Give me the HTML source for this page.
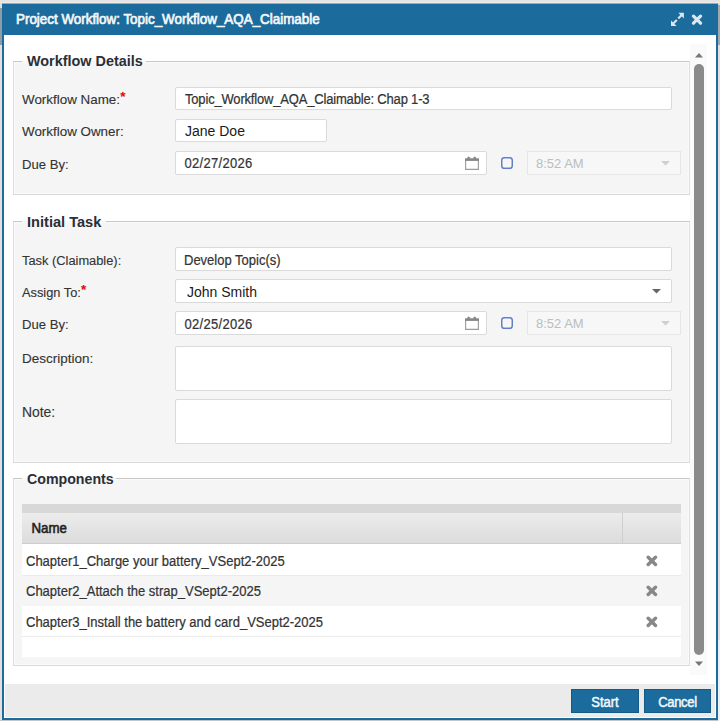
<!DOCTYPE html>
<html><head><meta charset="utf-8">
<style>
html,body{margin:0;padding:0;}
body{width:720px;height:721px;position:relative;overflow:hidden;background:#e0dcd8;font-family:"Liberation Sans",sans-serif;color:#333;}
.a{position:absolute;}
.t{position:absolute;white-space:pre;line-height:normal;}
#dlg{left:2px;top:4px;width:716px;height:716px;background:#1c6b9d;}
#content{left:4px;top:35px;width:712px;height:683px;background:#fff;}
#footer{left:5px;top:684px;width:710px;height:33px;background:#ebebeb;}
.fs{position:absolute;left:13px;width:675px;border:1px solid #dedede;border-top-color:#c8c8c8;border-bottom-color:#d9d9d9;background:#f5f5f5;box-shadow:inset 1px 1px 0 #fafafa, inset -1px -1px 0 #fafafa;}
.lg{position:absolute;background:#f5f5f5;height:1px;}
.lbl{font-size:13.5px;color:#333;letter-spacing:0px;-webkit-text-stroke:0.12px #333;}
.inp{position:absolute;background:#fff;border:1px solid #dadada;box-sizing:border-box;border-radius:2px;}
.itxt{font-size:13px;color:#333;-webkit-text-stroke:0.2px #333;transform:scaleY(1.15);transform-origin:0 12px;}
.req{color:#f00;font-size:13.5px;font-weight:bold;position:absolute;top:-3px;margin-left:0.3px;}
.dis{position:absolute;background:#f7f7f7;border:1px solid #e6e6e6;box-sizing:border-box;}
.btn{position:absolute;background:#1c6b9d;border:1px solid #155a86;box-sizing:border-box;color:#f4f7fa;font-size:13px;-webkit-text-stroke:0.45px #f4f7fa;text-align:center;}
.btn span{display:inline-block;transform:scaleY(1.1);transform-origin:50% 17px;}
.row{position:absolute;left:22px;width:659px;}
</style></head><body>
<div class="a" style="left:0;top:0;width:720px;height:2px;background:#e4e4e4;"></div>
<div class="a" style="left:0;top:2px;width:720px;height:1px;background:#efebe8;"></div>
<div class="a" style="left:0;top:8px;width:2px;height:37px;background:#8d9ca6;"></div>
<div class="a" style="left:718px;top:5px;width:2px;height:40px;background:#9ea9b1;"></div>
<div class="a" style="left:0;top:45px;width:2px;height:676px;background:#e4dfda;"></div>
<div class="a" style="left:718px;top:45px;width:2px;height:676px;background:#e4dfda;"></div>
<div class="a" style="left:0;top:720px;width:720px;height:1px;background:#c4c4c4;"></div>
<div class="a" style="left:718px;top:640px;width:2px;height:81px;background:#eef1f4;"></div>
<div class="a" id="dlg"></div>
<div class="a" style="left:2px;top:3px;width:716px;height:1px;background:#8aaec6;"></div>
<div class="a" id="content"></div>
<div class="a" id="footer"></div>

<div class="t" style="left:16px;top:12px;font-size:13.4px;color:#f4f7fa;-webkit-text-stroke:0.65px #f4f7fa;transform:scaleY(1.12);transform-origin:0 12.35px;">Project Workflow: Topic_Workflow_AQA_Claimable</div>
<svg class="a" style="left:670px;top:12px" width="15" height="15" viewBox="0 0 15 15">
 <g fill="#dce8f0"><path d="M8.3 0.8 L13.9 0.8 L13.9 6.4 Z"/><path d="M1 8.4 L1 14 L6.6 14 Z"/></g>
 <g stroke="#dce8f0" stroke-width="2.1" stroke-linecap="butt"><path d="M11.5 3.2 L8.2 6.5"/><path d="M6.8 7.9 L3.5 11.2"/></g>
</svg>
<svg class="a" style="left:691px;top:14px" width="12" height="12" viewBox="0 0 12 12">
 <path d="M2.5 2.2 L9.5 9.2 M9.5 2.2 L2.5 9.2" stroke="#dce8f0" stroke-width="3.2" stroke-linecap="round"/>
</svg>

<!-- Scrollbar -->
<div class="a" style="left:690px;top:44px;width:17px;height:631px;background:#fafafa;"></div>
<svg class="a" style="left:694px;top:52px" width="10" height="6" viewBox="0 0 10 6"><path d="M1 5.5 L5 1 L9 5.5 Z" fill="#777"/></svg>
<div class="a" style="left:694px;top:64px;width:10px;height:591px;background:#8a8a8a;border-radius:5px;"></div>
<svg class="a" style="left:694px;top:661px" width="10" height="6" viewBox="0 0 10 6"><path d="M1 0.5 L9 0.5 L5 5 Z" fill="#777"/></svg>

<!-- Fieldset 1 -->
<div class="fs" style="top:61px;height:132px;"></div>
<div class="a" style="left:22px;top:52px;width:124px;height:9px;background:#fff;"></div>
<div class="lg" style="left:22px;top:61px;width:124px;"></div>
<div class="t" style="left:27px;top:53px;font-size:14.4px;font-weight:bold;color:#2b2f36;">Workflow Details</div>

<div class="t lbl" style="left:22px;top:91.6px;font-size:13.4px;">Workflow Name:<span class="req">*</span></div>
<div class="inp" style="left:175px;top:87px;width:497px;height:23px;"></div>
<div class="t itxt" style="left:185px;top:91.5px;letter-spacing:-0.18px;">Topic_Workflow_AQA_Claimable: Chap 1-3</div>

<div class="t lbl" style="left:22px;top:124.09px;font-size:13.4px;">Workflow Owner:</div>
<div class="inp" style="left:175px;top:119px;width:152px;height:23px;"></div>
<div class="t itxt" style="left:185px;top:123px;font-size:14px;color:#1a1a1a;transform:none;-webkit-text-stroke:0;">Jane Doe</div>

<div class="t lbl" style="left:22px;top:156.87px;font-size:13.1px;">Due By:</div>
<div class="inp" style="left:175px;top:151px;width:312px;height:24px;"></div>
<div class="t itxt" style="left:184.5px;top:156px;letter-spacing:0.3px;">02/27/2026</div>
<svg class="a" style="left:465px;top:156px" width="14" height="14" viewBox="0 0 14 14">
 <path d="M0.6 3 V13.4 H13.4 V3" fill="none" stroke="#9a9a9a" stroke-width="1.1"/>
 <rect x="0" y="2.3" width="14" height="2.6" fill="#858585"/>
 <path d="M2.3 3 L2.6 1.2 Q3.7 -0.3 4.8 1.2 L5.1 3 Z" fill="#8a8a8a"/>
 <path d="M8.3 3 L8.6 1.2 Q9.7 -0.3 10.8 1.2 L11.1 3 Z" fill="#8a8a8a"/>
</svg>
<svg class="a" style="left:501px;top:156.5px" width="13" height="13" viewBox="0 0 13 13"><rect x="1.6" y="1.6" width="8.8" height="8.8" rx="0.5" fill="#f6f6f6" stroke="#fff" stroke-width="1"/><rect x="0.75" y="0.75" width="10.5" height="10.5" rx="2.6" fill="none" stroke="#5f80c9" stroke-width="1.5"/></svg>
<div class="dis" style="left:527px;top:151px;width:154px;height:24px;"></div>
<div class="t" style="left:536px;top:156px;font-size:13px;color:#bdbdbd;">8:52 AM</div>
<svg class="a" style="left:661px;top:161px" width="10" height="5" viewBox="0 0 10 5"><path d="M0 0 H9 L4.5 4.5 Z" fill="#cfcfcf"/></svg>

<!-- Fieldset 2 -->
<div class="fs" style="top:221px;height:240px;"></div>
<div class="a" style="left:22px;top:212px;width:84px;height:9px;background:#fff;"></div>
<div class="lg" style="left:22px;top:221px;width:84px;"></div>
<div class="t" style="left:27px;top:214px;font-size:14.6px;font-weight:bold;color:#2b2f36;">Initial Task</div>

<div class="t lbl" style="left:22px;top:253.14px;font-size:12.85px;">Task (Claimable):</div>
<div class="inp" style="left:175px;top:247px;width:497px;height:24px;"></div>
<div class="t itxt" style="left:184px;top:253px;">Develop Topic(s)</div>

<div class="t lbl" style="left:22px;top:284.8px;font-size:12.8px;">Assign To:<span class="req">*</span></div>
<div class="inp" style="left:175px;top:279px;width:497px;height:24px;"></div>
<div class="t itxt" style="left:187px;top:284px;font-size:14px;color:#1a1a1a;transform:none;-webkit-text-stroke:0;">John Smith</div>
<svg class="a" style="left:652px;top:289px" width="10" height="5" viewBox="0 0 10 5"><path d="M0 0 H9 L4.5 4.5 Z" fill="#666"/></svg>

<div class="t lbl" style="left:22px;top:317.37px;font-size:13.1px;">Due By:</div>
<div class="inp" style="left:175px;top:311px;width:312px;height:24px;"></div>
<div class="t itxt" style="left:184.5px;top:317px;letter-spacing:0.3px;">02/25/2026</div>
<svg class="a" style="left:465px;top:316px" width="14" height="14" viewBox="0 0 14 14">
 <path d="M0.6 3 V13.4 H13.4 V3" fill="none" stroke="#9a9a9a" stroke-width="1.1"/>
 <rect x="0" y="2.3" width="14" height="2.6" fill="#858585"/>
 <path d="M2.3 3 L2.6 1.2 Q3.7 -0.3 4.8 1.2 L5.1 3 Z" fill="#8a8a8a"/>
 <path d="M8.3 3 L8.6 1.2 Q9.7 -0.3 10.8 1.2 L11.1 3 Z" fill="#8a8a8a"/>
</svg>
<svg class="a" style="left:501px;top:316.5px" width="13" height="13" viewBox="0 0 13 13"><rect x="1.6" y="1.6" width="8.8" height="8.8" rx="0.5" fill="#f6f6f6" stroke="#fff" stroke-width="1"/><rect x="0.75" y="0.75" width="10.5" height="10.5" rx="2.6" fill="none" stroke="#5f80c9" stroke-width="1.5"/></svg>
<div class="dis" style="left:527px;top:311px;width:154px;height:24px;"></div>
<div class="t" style="left:536px;top:316px;font-size:13px;color:#bdbdbd;">8:52 AM</div>
<svg class="a" style="left:661px;top:321px" width="10" height="5" viewBox="0 0 10 5"><path d="M0 0 H9 L4.5 4.5 Z" fill="#cfcfcf"/></svg>

<div class="t lbl" style="left:22px;top:351.0px;font-size:13.5px;">Description:</div>
<div class="inp" style="left:175px;top:346px;width:497px;height:45px;"></div>
<div class="t lbl" style="left:22px;top:404.13px;font-size:13.9px;">Note:</div>
<div class="inp" style="left:175px;top:399px;width:497px;height:45px;"></div>

<!-- Fieldset 3 -->
<div class="fs" style="top:478px;height:186px;"></div>
<div class="a" style="left:22px;top:469px;width:94px;height:9px;background:#fff;"></div>
<div class="lg" style="left:22px;top:478px;width:94px;"></div>
<div class="t" style="left:27px;top:471px;font-size:14.2px;font-weight:bold;color:#2b2f36;">Components</div>

<div class="a" style="left:22px;top:504px;width:659px;height:9px;background:#d8d8d8;"></div>
<div class="a" style="left:22px;top:513px;width:659px;height:31px;background:linear-gradient(#ececec,#dcdcdc);border-bottom:1px solid #cdcdcd;box-sizing:border-box;"></div>
<div class="a" style="left:622px;top:513px;width:1px;height:31px;background:#cfcfcf;"></div>
<div class="t" style="left:31.5px;top:520.5px;font-size:13.3px;color:#222;-webkit-text-stroke:0.55px #222;transform:scaleY(1.08);transform-origin:0 12.2px;">Name</div>

<div class="row" style="top:544px;height:31px;background:#fff;"></div>
<div class="row" style="top:575px;height:31px;background:#f5f5f5;border-top:1px solid #ebebeb;box-sizing:border-box;"></div>
<div class="row" style="top:606px;height:30px;background:#fff;"></div>
<div class="row" style="top:636px;height:1px;background:#ececec;"></div>
<div class="row" style="top:637px;height:20px;background:#fff;"></div>

<div class="t itxt" style="left:26px;top:553.5px;">Chapter1_Charge your battery_VSept2-2025</div>
<div class="t itxt" style="left:26px;top:584px;">Chapter2_Attach the strap_VSept2-2025</div>
<div class="t itxt" style="left:26px;top:614.5px;">Chapter3_Install the battery and card_VSept2-2025</div>

<svg class="a" style="left:646px;top:555px" width="12" height="12" viewBox="0 0 12 12"><path d="M2.2 2.2 L9.5 9.5 M9.5 2.2 L2.2 9.5" stroke="#888" stroke-width="3.4" stroke-linecap="round"/></svg>
<svg class="a" style="left:646px;top:585px" width="12" height="12" viewBox="0 0 12 12"><path d="M2.2 2.2 L9.5 9.5 M9.5 2.2 L2.2 9.5" stroke="#888" stroke-width="3.4" stroke-linecap="round"/></svg>
<svg class="a" style="left:646px;top:616px" width="12" height="12" viewBox="0 0 12 12"><path d="M2.2 2.2 L9.5 9.5 M9.5 2.2 L2.2 9.5" stroke="#888" stroke-width="3.4" stroke-linecap="round"/></svg>

<!-- Footer buttons -->
<div class="btn" style="left:571px;top:689px;width:68px;height:24px;line-height:25px;"><span>Start</span></div>
<div class="btn" style="left:644px;top:689px;width:67px;height:24px;line-height:25px;letter-spacing:-0.3px;"><span>Cancel</span></div>
</body></html>
